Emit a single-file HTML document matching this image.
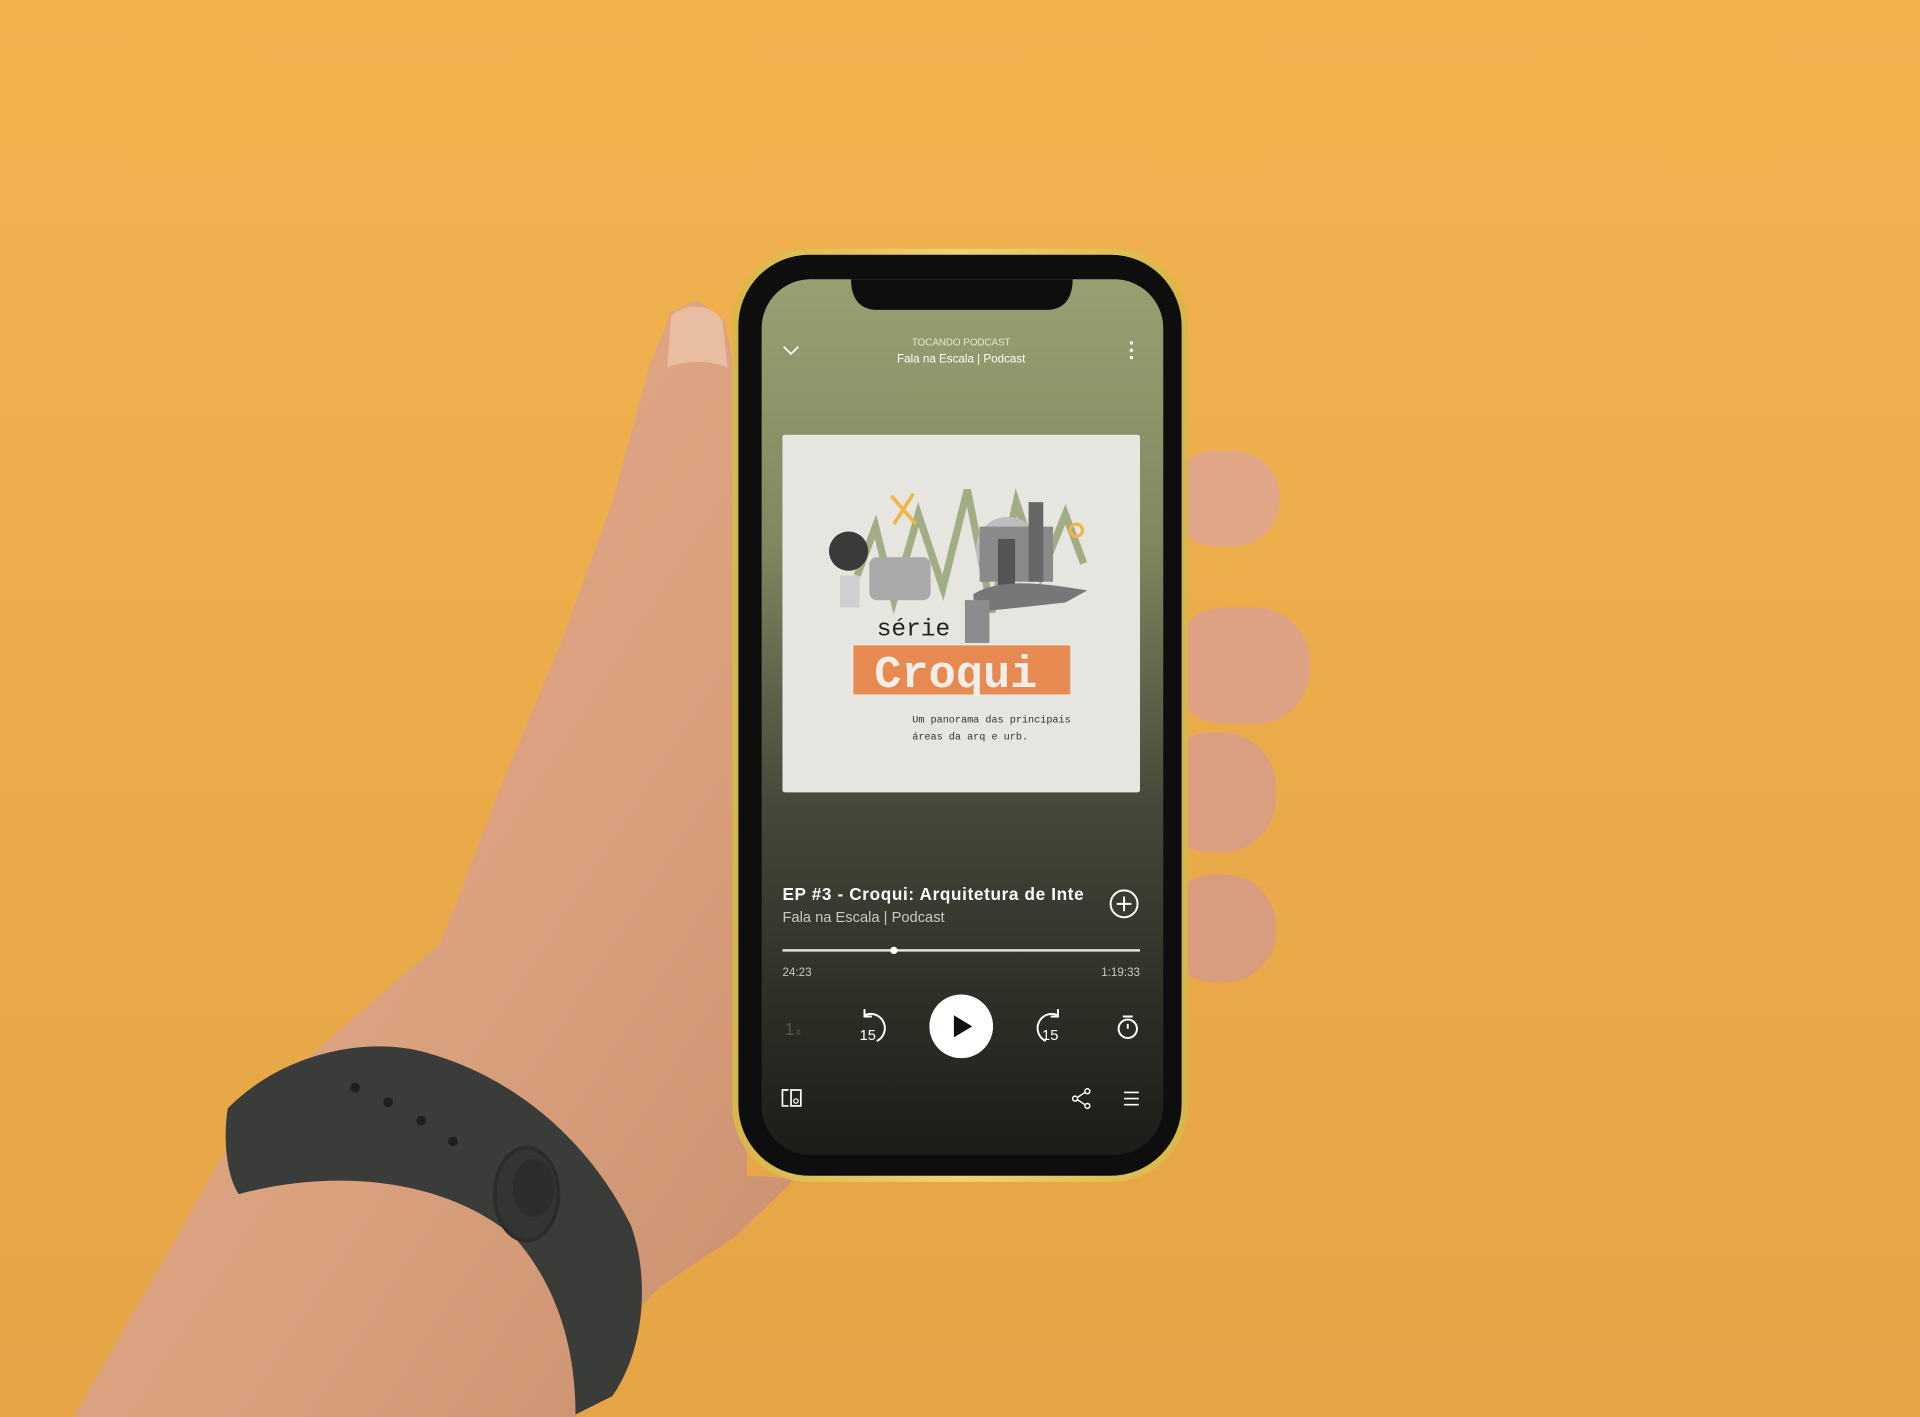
<!DOCTYPE html>
<html><head><meta charset="utf-8"><style>
html,body{margin:0;padding:0;width:1920px;height:1417px;overflow:hidden;background:#EEAE4C}
svg{display:block}
.s{font-family:"Liberation Sans",sans-serif}
.m{font-family:"Liberation Mono",monospace}
</style></head><body>
<svg width="1920" height="1417" viewBox="0 0 1568 1157" preserveAspectRatio="none" xmlns="http://www.w3.org/2000/svg">
<defs>
<linearGradient id="bg" x1="0" y1="0" x2="0" y2="1"><stop offset="0" stop-color="#F2B34F"/><stop offset="1" stop-color="#E6A445"/></linearGradient>
<linearGradient id="scr" x1="0" y1="0" x2="0" y2="1"><stop offset="0" stop-color="#98A072"/><stop offset="0.3" stop-color="#7f8860"/><stop offset="0.6" stop-color="#44493a"/><stop offset="1" stop-color="#1b1c18"/></linearGradient>
<linearGradient id="skin" x1="0" y1="0" x2="1" y2="1"><stop offset="0" stop-color="#E3AD8C"/><stop offset="0.6" stop-color="#D9A07E"/><stop offset="1" stop-color="#C98F6E"/></linearGradient>
<linearGradient id="frame" x1="0" y1="0" x2="1" y2="0"><stop offset="0" stop-color="#d9b54a"/><stop offset="0.5" stop-color="#f0d270"/><stop offset="1" stop-color="#d8b648"/></linearGradient>
</defs>
<rect width="1568" height="1157" fill="url(#bg)"/>
<path d="M60,1157 L150,1000 L200,910 L290,830 L360,770 L410,640 L460,520 L500,410 L530,300 L548,255 L570,245 L592,262 L605,330 L610,960 L650,962 L600,1010 L540,1050 L500,1090 L470,1157 Z" fill="url(#skin)"/>
<path d="M548,258 C560,246 582,248 590,262 L594,300 C580,294 560,294 545,300 Z" fill="#E9BDA2"/>
<rect x="955" y="368" width="90" height="78" rx="38" fill="#DFA788"/>
<rect x="955" y="496" width="115" height="95" rx="45" fill="#DDA283"/>
<rect x="945" y="598" width="97" height="98" rx="44" fill="#DA9F80"/>
<rect x="950" y="714" width="92" height="88" rx="42" fill="#D89C7E"/>
<path d="M186,905 C230,860 300,845 350,860 C420,880 480,930 515,1000 C530,1040 528,1100 500,1140 L470,1155 C470,1100 455,1050 420,1010 C360,960 270,955 195,975 C185,960 182,930 186,905 Z" fill="#3a3c3a"/>
<circle cx="290" cy="888" r="4" fill="#1e1f1e"/><circle cx="317" cy="900" r="4" fill="#1e1f1e"/><circle cx="344" cy="915" r="4" fill="#1e1f1e"/><circle cx="370" cy="932" r="4" fill="#1e1f1e"/>
<ellipse cx="430" cy="975" rx="26" ry="38" fill="#333533" stroke="#2a2b2a" stroke-width="3"/>
<ellipse cx="436" cy="970" rx="17" ry="24" fill="#2c2e2c"/>
<rect x="598" y="203" width="372" height="762" rx="62" fill="url(#frame)"/>
<rect x="603" y="208" width="362" height="752" rx="58" fill="#0e0e0e"/>
<rect x="622" y="228" width="328" height="715" rx="40" fill="url(#scr)"/>
<path d="M695,228 L876,228 C876,242 870,253 855,253 L716,253 C701,253 695,242 695,228 Z" fill="#0e0e0e"/>
<path d="M640,283 L646,289 L652,283" fill="none" stroke="#fff" stroke-width="1.4"/>
<circle cx="924" cy="280" r="1.4" fill="#fff"/><circle cx="924" cy="286" r="1.4" fill="#fff"/><circle cx="924" cy="292" r="1.4" fill="#fff"/>
<text class="s" x="785" y="282" font-size="8" fill="#e8ead8" text-anchor="middle">TOCANDO PODCAST</text>
<text class="s" x="785" y="296" font-size="9.5" fill="#fff" text-anchor="middle">Fala na Escala | Podcast</text>
<rect x="639" y="355" width="292" height="292" rx="2" fill="#E6E5E0"/>
<path d="M700,470 L715,430 L730,490 L750,420 L770,480 L790,400 L810,500 L830,410 L850,470 L870,420 L885,460" fill="none" stroke="#A2AC85" stroke-width="6"/>
<path d="M728,405 L748,428 M746,403 L730,428" stroke="#F0B64C" stroke-width="3"/>
<circle cx="879" cy="433" r="5" fill="none" stroke="#F0B64C" stroke-width="2.5"/>
<circle cx="823" cy="448" r="26" fill="#bdbdbd"/>
<rect x="800" y="430" width="60" height="45" fill="#8a8a8a"/>
<rect x="840" y="410" width="12" height="65" fill="#666"/>
<rect x="815" y="440" width="14" height="40" fill="#555"/>
<path d="M795,485 C820,470 860,478 888,482 L870,492 L795,500 Z" fill="#777"/>
<rect x="788" y="490" width="20" height="35" fill="#8c8c8c"/>
<rect x="710" y="455" width="50" height="35" rx="6" fill="#a9a9a9"/>
<circle cx="693" cy="450" r="16" fill="#3a3a3a"/>
<rect x="686" y="470" width="16" height="26" fill="#cfcfcf"/>
<text class="m" x="716" y="519" font-size="20" fill="#222">série</text>
<rect x="697" y="527" width="177" height="40" fill="#E68A52"/>
<text class="m" x="714" y="561" font-size="37" font-weight="bold" fill="#f2ede6">Croqui</text>
<text class="m" x="745" y="590" font-size="8.3" fill="#333">Um panorama das principais</text>
<text class="m" x="745" y="604" font-size="8.3" fill="#333">áreas da arq e urb.</text>
<text class="s" x="639" y="735" font-size="14" font-weight="bold" fill="#fff" textLength="246">EP #3 - Croqui: Arquitetura de Inte</text>
<text class="s" x="639" y="753" font-size="12" fill="#c9cabf">Fala na Escala | Podcast</text>
<circle cx="918" cy="738" r="11" fill="none" stroke="#fff" stroke-width="1.6"/>
<path d="M912,738 H924 M918,732 V744" stroke="#fff" stroke-width="1.6"/>
<rect x="639" y="775" width="292" height="2" fill="#e4e4dc"/>
<circle cx="730" cy="776" r="3" fill="#fff"/>
<text class="s" x="639" y="797" font-size="9.5" fill="#c9cabf">24:23</text>
<text class="s" x="931" y="797" font-size="9.5" fill="#c9cabf" text-anchor="end">1:19:33</text>
<text class="s" x="641" y="845" font-size="14" fill="#555a4c">1</text><text class="s" x="650" y="845" font-size="8" fill="#555a4c">x</text>
<path d="M706,829 A11,11 0 1 1 716,850" fill="none" stroke="#fff" stroke-width="1.6"/>
<path d="M706,824 L706,830 L712,830" fill="none" stroke="#fff" stroke-width="1.6"/>
<text class="s" x="702" y="849" font-size="12" fill="#fff">15</text>
<path d="M864,829 A11,11 0 1 0 854,850" fill="none" stroke="#fff" stroke-width="1.6"/>
<path d="M864,824 L864,830 L858,830" fill="none" stroke="#fff" stroke-width="1.6"/>
<text class="s" x="851" y="849" font-size="12" fill="#fff">15</text>
<circle cx="785" cy="838" r="26" fill="#fff"/>
<path d="M779,829 L794,838 L779,847 Z" fill="#111"/>
<circle cx="921" cy="840" r="7.5" fill="none" stroke="#fff" stroke-width="1.6"/>
<path d="M917,830 H925 M921,836 V840" stroke="#fff" stroke-width="1.6"/>
<path d="M644,890 H639 V903 H644" fill="none" stroke="#fff" stroke-width="1.4"/>
<rect x="646" y="890" width="8" height="13" fill="none" stroke="#fff" stroke-width="1.4"/>
<circle cx="650" cy="899" r="1.8" fill="none" stroke="#fff" stroke-width="1"/>
<circle cx="878" cy="897" r="2" fill="none" stroke="#fff" stroke-width="1.2"/><circle cx="888" cy="891" r="2" fill="none" stroke="#fff" stroke-width="1.2"/><circle cx="888" cy="903" r="2" fill="none" stroke="#fff" stroke-width="1.2"/>
<path d="M880,896 L886,892 M880,898 L886,902" stroke="#fff" stroke-width="1.2"/>
<path d="M918,892 H930 M918,897 H930 M918,902 H930" stroke="#fff" stroke-width="1.4"/>
</svg>
</body></html>
